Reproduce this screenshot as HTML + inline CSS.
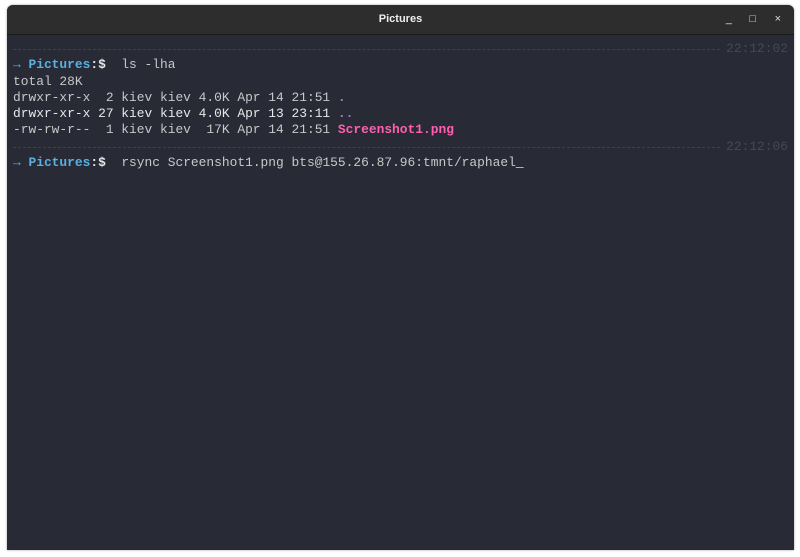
<!DOCTYPE html>
<html><head><style>
html,body{margin:0;padding:0;background:#fff;width:800px;height:557px;overflow:hidden}
.win{position:absolute;left:7px;top:5px;width:787px;height:545px;background:#282a36;border-radius:6px 6px 0 0;overflow:hidden;box-shadow:0 0 2px rgba(0,0,0,.4)}
.tb{height:29px;background:#2d2d2d;border-bottom:1px solid #1a1a1a;color:#eee;font:bold 11px "Liberation Sans",sans-serif;text-align:center;line-height:29px;position:relative}
.btn{position:absolute;top:0;font-weight:normal;font-size:11px;color:#ddd}
.term{position:absolute;left:6px;top:36px;right:6px;font:12.9px/16.3px "Liberation Mono",monospace;color:#c8c8c8}
.l{height:16.3px;white-space:pre}
.sep{position:relative;height:16.3px}
.sep i{position:absolute;left:0;right:68px;top:8px;border-top:1px dashed #3e4150}
.sep span{position:absolute;right:0;top:0;color:#454856}
.b{color:#5ab0e0;font-weight:bold}
.w{color:#e8e8e8;font-weight:bold}
.p{color:#9b7bd8;font-weight:bold}
.m{color:#ff5fb0;font-weight:bold}
</style></head><body>
<div class="win">
<div class="tb">Pictures<span class="btn" style="right:62px">_</span><span class="btn" style="right:38px">□</span><span class="btn" style="right:13px">×</span></div>
<div class="term">
<div class="sep"><i></i><span>22:12:02</span></div>
<div class="l"><span class="b">→ Pictures</span><span class="w">:$</span>  ls -lha</div>
<div class="l">total 28K</div>
<div class="l">drwxr-xr-x  2 kiev kiev 4.0K Apr 14 21:51 <span class="p">.</span></div>
<div class="l" style="color:#e8e8e8">drwxr-xr-x 27 kiev kiev 4.0K Apr 13 23:11 <span class="p">..</span></div>
<div class="l">-rw-rw-r--  1 kiev kiev  17K Apr 14 21:51 <span class="m">Screenshot1.png</span></div>
<div class="sep"><i></i><span>22:12:06</span></div>
<div class="l"><span class="b">→ Pictures</span><span class="w">:$</span>  rsync Screenshot1.png bts@155.26.87.96:tmnt/raphael<span style="color:#fff">_</span></div>
</div>
</div>
</body></html>
